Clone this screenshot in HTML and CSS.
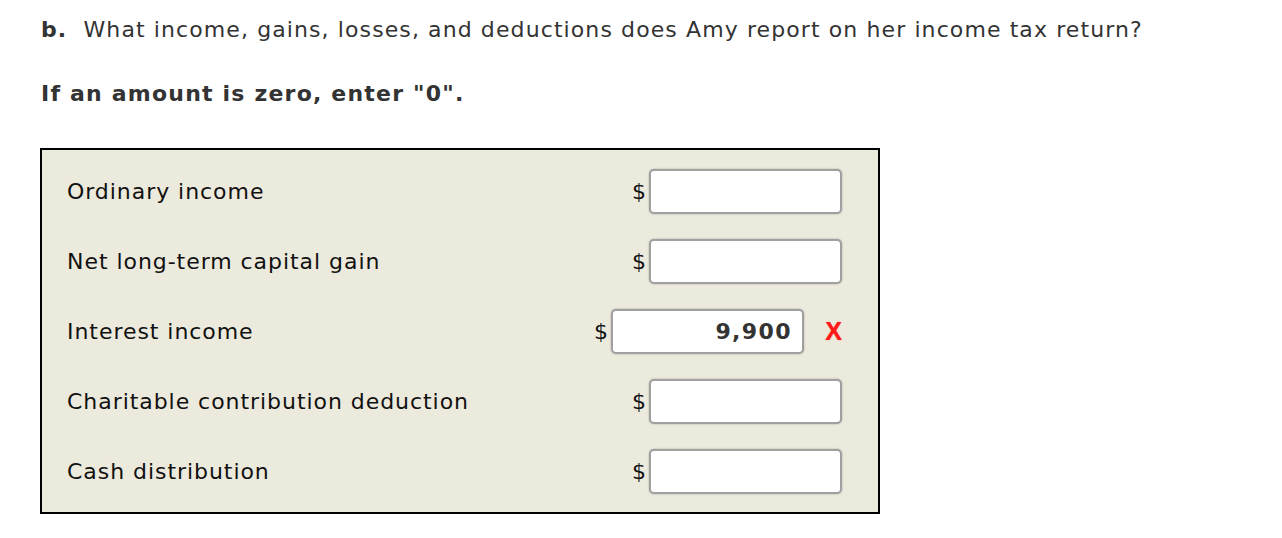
FILE: index.html
```html
<!DOCTYPE html>
<html>
<head>
<meta charset="utf-8">
<link rel="stylesheet" href="styles.css">
</head>
<body>
<p class="question"><b>b.</b>&nbsp; What income, gains, losses, and deductions does Amy report on her income tax return?</p>
<p class="note">If an amount is zero, enter "0".</p>
<div class="answer-box">
  <div class="row">
    <span class="label">Ordinary income</span>
    <span class="field"><span class="dollar">$</span><span class="input"></span></span>
  </div>
  <div class="row">
    <span class="label">Net long-term capital gain</span>
    <span class="field"><span class="dollar">$</span><span class="input"></span></span>
  </div>
  <div class="row">
    <span class="label">Interest income</span>
    <span class="field"><span class="dollar">$</span><span class="input filled">9,900</span><span class="mark">X</span></span>
  </div>
  <div class="row">
    <span class="label">Charitable contribution deduction</span>
    <span class="field"><span class="dollar">$</span><span class="input"></span></span>
  </div>
  <div class="row">
    <span class="label">Cash distribution</span>
    <span class="field"><span class="dollar">$</span><span class="input"></span></span>
  </div>
</div>
</body>
</html>
```

FILE: styles.css
```css
html, body {
  margin: 0;
  padding: 0;
  background: #ffffff;
}
body {
  padding: 14px 0 0 40px;
  font-family: "DejaVu Sans", Verdana, sans-serif;
  font-size: 22px;
  color: #333333;
}
.question {
  margin: 0;
  line-height: 32px;
  padding-left: 1px;
  letter-spacing: 1.1px;
}
.note {
  margin: 32px 0 0 1px;
  line-height: 32px;
  font-weight: bold;
  letter-spacing: 1.2px;
}
.answer-box {
  margin-top: 38px;
  width: 836px;
  border: 2px solid #000;
  background: #eceadd;
  padding: 6px 0;
  color: #111;
}
.row {
  height: 70px;
  display: flex;
  align-items: center;
  justify-content: space-between;
  padding: 0 36px 0 25px;
}
.label {
  letter-spacing: 0.95px;
}
.field {
  display: flex;
  align-items: center;
}
.dollar {
  margin-right: 3px;
  color: #111;
}
.input {
  box-sizing: border-box;
  width: 193px;
  height: 45px;
  border: 2px solid #a0a0a0;
  border-radius: 5px;
  background: #fff;
  box-shadow: 0 0 2px rgba(0,0,0,0.3);
}
.input.filled {
  display: flex;
  align-items: center;
  justify-content: flex-end;
  padding-right: 10px;
  font-weight: bold;
  letter-spacing: 1.4px;
  color: #333;
}
.mark {
  width: 38px;
  text-align: right;
  color: #ff1a1a;
  font-family: "Liberation Sans", Arial, sans-serif;
  font-weight: bold;
  font-size: 25px;
  text-shadow: 0 0 1px #ff4040;
}
```
